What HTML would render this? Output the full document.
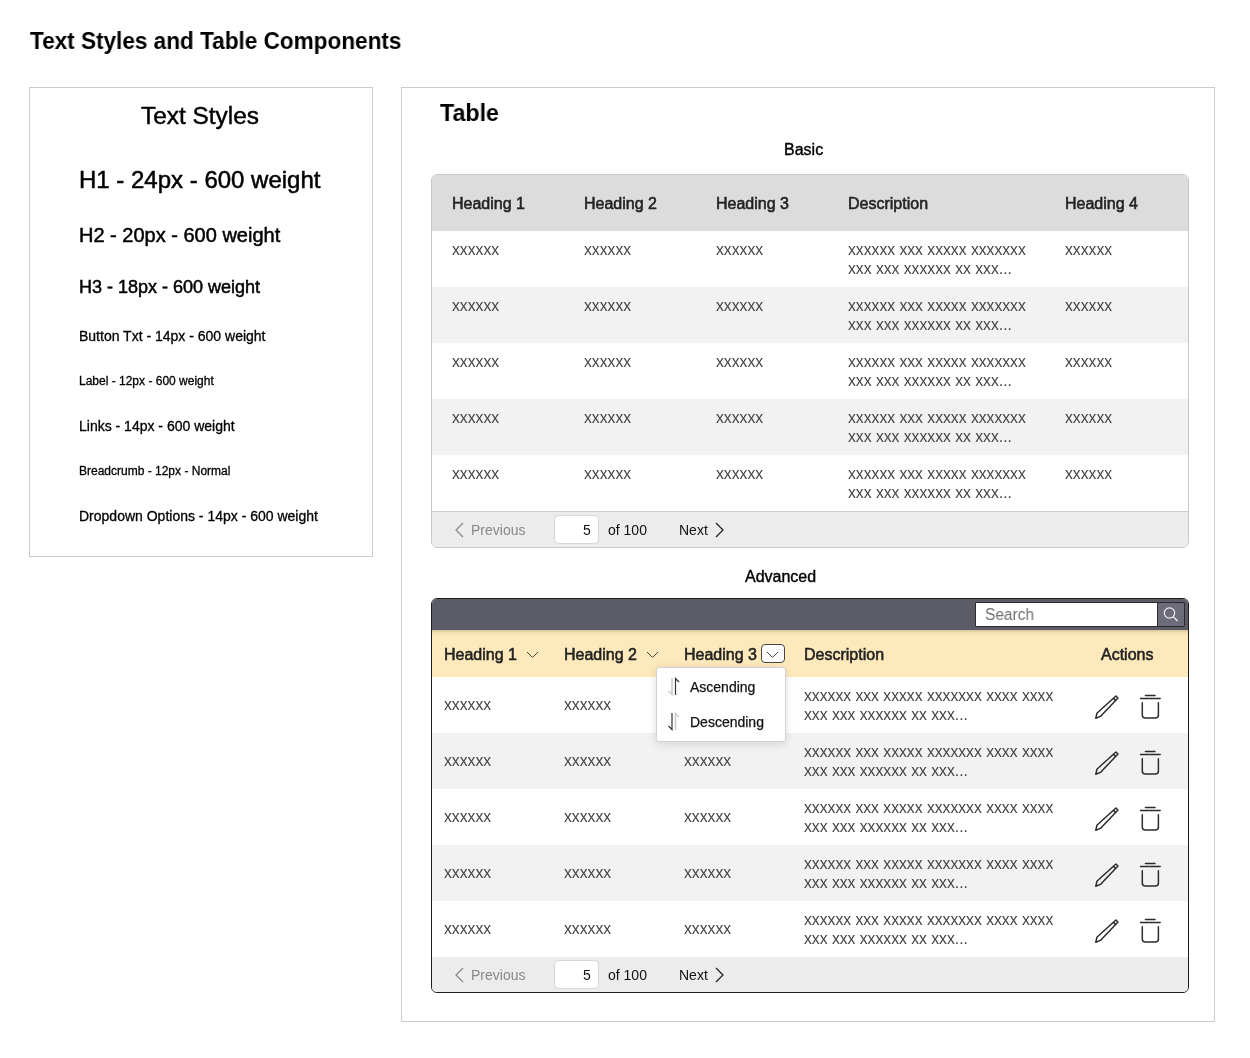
<!DOCTYPE html>
<html><head><meta charset="utf-8"><title>Text Styles and Table Components</title>
<style>
html,body{margin:0;padding:0;background:#fff;}
body{width:1250px;height:1058px;position:relative;overflow:hidden;font-family:"Liberation Sans",sans-serif;}
.t{position:absolute;white-space:nowrap;line-height:1;will-change:transform;}
.r{position:absolute;}
svg.r{overflow:visible;}
</style></head><body>
<div class="t " style="left:29.60px;top:28.68px;font-size:24px;color:#000;font-weight:700;transform:scaleX(0.94);transform-origin:0 0;">Text Styles and Table Components</div>
<div class="r" style="left:29px;top:87px;width:344px;height:470px;border:1px solid #cccccc;box-sizing:border-box;"></div>
<div class="t" style="left:-100.00px;width:600px;text-align:center;top:103.55px;font-size:24.4px;color:#000;-webkit-text-stroke:0.45px #000;">Text Styles</div>
<div class="t " style="left:78.50px;top:167.78px;font-size:24px;color:#000;-webkit-text-stroke:0.5px #000;">H1 - 24px - 600 weight</div>
<div class="t " style="left:78.50px;top:225.07px;font-size:20px;color:#000;-webkit-text-stroke:0.5px #000;">H2 - 20px - 600 weight</div>
<div class="t " style="left:78.50px;top:277.56px;font-size:18px;color:#000;-webkit-text-stroke:0.5px #000;">H3 - 18px - 600 weight</div>
<div class="t " style="left:78.50px;top:329.15px;font-size:14px;color:#000;-webkit-text-stroke:0.3px #000;">Button Txt - 14px - 600 weight</div>
<div class="t " style="left:78.50px;top:374.64px;font-size:12px;color:#000;-webkit-text-stroke:0.3px #000;">Label - 12px - 600 weight</div>
<div class="t " style="left:78.50px;top:418.95px;font-size:14px;color:#000;-webkit-text-stroke:0.3px #000;">Links - 14px - 600 weight</div>
<div class="t " style="left:78.50px;top:464.84px;font-size:12px;color:#000;-webkit-text-stroke:0.3px #000;">Breadcrumb - 12px - Normal</div>
<div class="t " style="left:78.50px;top:509.05px;font-size:14px;color:#000;-webkit-text-stroke:0.3px #000;">Dropdown Options - 14px - 600 weight</div>
<div class="r" style="left:401px;top:87px;width:814px;height:935px;border:1px solid #cccccc;box-sizing:border-box;"></div>
<div class="t " style="left:440.00px;top:100.68px;font-size:24px;color:#000;font-weight:700;transform:scaleX(0.967);transform-origin:0 0;">Table</div>
<div class="t " style="left:784.00px;top:142.06px;font-size:16px;color:#000;-webkit-text-stroke:0.4px #000;">Basic</div>
<div class="t " style="left:745.20px;top:568.66px;font-size:16px;color:#000;-webkit-text-stroke:0.4px #000;">Advanced</div>
<div class="r" style="left:431px;top:174px;width:758px;height:374px;border:1px solid #c8c8c8;border-radius:6px;box-sizing:border-box;overflow:hidden;background:#fff;"><div class="r" style="left:0px;top:0px;width:756px;height:56px;background:#dcdcdc;"></div>
<div class="r" style="left:0px;top:56px;width:756px;height:56px;background:#ffffff;"></div>
<div class="r" style="left:0px;top:112px;width:756px;height:56px;background:#f2f2f2;"></div>
<div class="r" style="left:0px;top:168px;width:756px;height:56px;background:#ffffff;"></div>
<div class="r" style="left:0px;top:224px;width:756px;height:56px;background:#f2f2f2;"></div>
<div class="r" style="left:0px;top:280px;width:756px;height:56px;background:#ffffff;"></div>
<div class="r" style="left:0px;top:336px;width:756px;height:1px;background:#cfcfcf;"></div>
<div class="r" style="left:0px;top:337px;width:756px;height:40px;background:#ececec;"></div>
</div>
<div class="t " style="left:451.90px;top:196.26px;font-size:16px;color:#222;-webkit-text-stroke:0.55px #222;">Heading 1</div>
<div class="t " style="left:583.90px;top:196.26px;font-size:16px;color:#222;-webkit-text-stroke:0.55px #222;">Heading 2</div>
<div class="t " style="left:715.90px;top:196.26px;font-size:16px;color:#222;-webkit-text-stroke:0.55px #222;">Heading 3</div>
<div class="t " style="left:847.90px;top:196.26px;font-size:16px;color:#222;-webkit-text-stroke:0.55px #222;">Description</div>
<div class="t " style="left:1064.90px;top:196.26px;font-size:16px;color:#222;-webkit-text-stroke:0.55px #222;">Heading 4</div>
<div class="t " style="left:452.30px;top:241.91px;font-size:15.7px;color:#444;">xxxxxx</div>
<div class="t " style="left:584.30px;top:241.91px;font-size:15.7px;color:#444;">xxxxxx</div>
<div class="t " style="left:716.30px;top:241.91px;font-size:15.7px;color:#444;">xxxxxx</div>
<div class="t " style="left:1065.30px;top:241.91px;font-size:15.7px;color:#444;">xxxxxx</div>
<div class="t " style="left:848.30px;top:241.91px;font-size:15.7px;color:#444;">xxxxxx xxx xxxxx xxxxxxx</div>
<div class="t " style="left:848.30px;top:260.61px;font-size:15.7px;color:#444;">xxx xxx xxxxxx xx xxx...</div>
<div class="t " style="left:452.30px;top:297.91px;font-size:15.7px;color:#444;">xxxxxx</div>
<div class="t " style="left:584.30px;top:297.91px;font-size:15.7px;color:#444;">xxxxxx</div>
<div class="t " style="left:716.30px;top:297.91px;font-size:15.7px;color:#444;">xxxxxx</div>
<div class="t " style="left:1065.30px;top:297.91px;font-size:15.7px;color:#444;">xxxxxx</div>
<div class="t " style="left:848.30px;top:297.91px;font-size:15.7px;color:#444;">xxxxxx xxx xxxxx xxxxxxx</div>
<div class="t " style="left:848.30px;top:316.61px;font-size:15.7px;color:#444;">xxx xxx xxxxxx xx xxx...</div>
<div class="t " style="left:452.30px;top:353.91px;font-size:15.7px;color:#444;">xxxxxx</div>
<div class="t " style="left:584.30px;top:353.91px;font-size:15.7px;color:#444;">xxxxxx</div>
<div class="t " style="left:716.30px;top:353.91px;font-size:15.7px;color:#444;">xxxxxx</div>
<div class="t " style="left:1065.30px;top:353.91px;font-size:15.7px;color:#444;">xxxxxx</div>
<div class="t " style="left:848.30px;top:353.91px;font-size:15.7px;color:#444;">xxxxxx xxx xxxxx xxxxxxx</div>
<div class="t " style="left:848.30px;top:372.61px;font-size:15.7px;color:#444;">xxx xxx xxxxxx xx xxx...</div>
<div class="t " style="left:452.30px;top:409.91px;font-size:15.7px;color:#444;">xxxxxx</div>
<div class="t " style="left:584.30px;top:409.91px;font-size:15.7px;color:#444;">xxxxxx</div>
<div class="t " style="left:716.30px;top:409.91px;font-size:15.7px;color:#444;">xxxxxx</div>
<div class="t " style="left:1065.30px;top:409.91px;font-size:15.7px;color:#444;">xxxxxx</div>
<div class="t " style="left:848.30px;top:409.91px;font-size:15.7px;color:#444;">xxxxxx xxx xxxxx xxxxxxx</div>
<div class="t " style="left:848.30px;top:428.61px;font-size:15.7px;color:#444;">xxx xxx xxxxxx xx xxx...</div>
<div class="t " style="left:452.30px;top:465.91px;font-size:15.7px;color:#444;">xxxxxx</div>
<div class="t " style="left:584.30px;top:465.91px;font-size:15.7px;color:#444;">xxxxxx</div>
<div class="t " style="left:716.30px;top:465.91px;font-size:15.7px;color:#444;">xxxxxx</div>
<div class="t " style="left:1065.30px;top:465.91px;font-size:15.7px;color:#444;">xxxxxx</div>
<div class="t " style="left:848.30px;top:465.91px;font-size:15.7px;color:#444;">xxxxxx xxx xxxxx xxxxxxx</div>
<div class="t " style="left:848.30px;top:484.61px;font-size:15.7px;color:#444;">xxx xxx xxxxxx xx xxx...</div>
<svg class="r" style="left:454px;top:521.5px" width="11" height="16" viewBox="0 0 11 16"><path d="M9 1 L2 8 L9 15" fill="none" stroke="#8a8a8a" stroke-width="1.3"/></svg>
<div class="t " style="left:470.80px;top:522.65px;font-size:14px;color:#888;">Previous</div>
<div class="r" style="left:554px;top:515px;width:45px;height:29px;background:#fff;border:1px solid #d6d6d6;border-radius:5px;box-sizing:border-box;"></div>
<div class="t " style="left:582.90px;top:522.65px;font-size:14px;color:#111;">5</div>
<div class="t " style="left:608.00px;top:522.65px;font-size:14px;color:#111;">of 100</div>
<div class="t " style="left:679.30px;top:522.65px;font-size:14px;color:#111;">Next</div>
<svg class="r" style="left:714px;top:521.5px" width="11" height="16" viewBox="0 0 11 16"><path d="M2 1 L9 8 L2 15" fill="none" stroke="#222" stroke-width="1.3"/></svg>
<div class="r" style="left:431px;top:598px;width:758px;height:395px;border:1px solid #1e1e1e;border-radius:6px;box-sizing:border-box;overflow:hidden;background:#fff;"><div class="r" style="left:0px;top:0px;width:756px;height:31px;background:#5c5c67;"></div>
<div class="r" style="left:0px;top:31px;width:756px;height:47px;background:#fde9bb;"></div>
<div class="r" style="left:0px;top:31px;width:756px;height:6px;background:linear-gradient(#d6c39b,#f0dcb0 40%,#fde9bb);"></div>
<div class="r" style="left:0px;top:78px;width:756px;height:56px;background:#ffffff;"></div>
<div class="r" style="left:0px;top:134px;width:756px;height:56px;background:#f2f2f2;"></div>
<div class="r" style="left:0px;top:190px;width:756px;height:56px;background:#ffffff;"></div>
<div class="r" style="left:0px;top:246px;width:756px;height:56px;background:#f2f2f2;"></div>
<div class="r" style="left:0px;top:302px;width:756px;height:56px;background:#ffffff;"></div>
<div class="r" style="left:0px;top:358px;width:756px;height:40px;background:#ececec;"></div>
</div>
<div class="r" style="left:975px;top:602px;width:210px;height:25px;background:#fff;border:1px solid #2a2a2a;box-sizing:border-box;border-radius:1px;"></div>
<div class="r" style="left:1157px;top:602px;width:28px;height:25px;background:#6c6d79;border:1px solid #2a2a2a;box-sizing:border-box;border-radius:0 2px 2px 0;"></div>
<div class="t " style="left:985.00px;top:606.66px;font-size:16px;color:#6e6e6e;transform:scaleX(0.968);transform-origin:0 0;">Search</div>
<svg class="r" style="left:1160px;top:604px" width="22" height="22" viewBox="0 0 22 22"><circle cx="9.5" cy="9" r="5.2" fill="none" stroke="#f0f0f0" stroke-width="1.2"/><path d="M13.3 12.8 L17.6 17" stroke="#f0f0f0" stroke-width="1.3" fill="none"/></svg>
<div class="t " style="left:443.90px;top:646.96px;font-size:16px;color:#222;-webkit-text-stroke:0.55px #222;">Heading 1</div>
<svg class="r" style="left:526px;top:650.5px" width="13" height="8" viewBox="0 0 13 8"><path d="M1 1 L6.5 6.5 L12 1" fill="none" stroke="#444" stroke-width="1"/></svg>
<div class="t " style="left:563.90px;top:646.96px;font-size:16px;color:#222;-webkit-text-stroke:0.55px #222;">Heading 2</div>
<svg class="r" style="left:646px;top:650.5px" width="13" height="8" viewBox="0 0 13 8"><path d="M1 1 L6.5 6.5 L12 1" fill="none" stroke="#444" stroke-width="1"/></svg>
<div class="t " style="left:683.90px;top:646.96px;font-size:16px;color:#222;-webkit-text-stroke:0.55px #222;">Heading 3</div>
<div class="r" style="left:761px;top:644px;width:24px;height:19px;background:#fff;border:1px solid #444;border-radius:4px;box-sizing:border-box;"></div>
<svg class="r" style="left:766px;top:650.5px" width="13" height="8" viewBox="0 0 13 8"><path d="M1 1 L6.5 6.5 L12 1" fill="none" stroke="#444" stroke-width="1"/></svg>
<div class="t " style="left:804.00px;top:646.96px;font-size:16px;color:#222;-webkit-text-stroke:0.55px #222;">Description</div>
<div class="t " style="left:1100.60px;top:646.96px;font-size:16px;color:#222;-webkit-text-stroke:0.55px #222;">Actions</div>
<div class="t " style="left:443.80px;top:696.71px;font-size:15.7px;color:#444;">xxxxxx</div>
<div class="t " style="left:563.80px;top:696.71px;font-size:15.7px;color:#444;">xxxxxx</div>
<div class="t " style="left:803.70px;top:688.11px;font-size:15.7px;color:#444;">xxxxxx xxx xxxxx xxxxxxx xxxx xxxx</div>
<div class="t " style="left:803.70px;top:707.31px;font-size:15.7px;color:#444;">xxx xxx xxxxxx xx xxx...</div>
<svg class="r" style="left:1092px;top:692px" width="30" height="30" viewBox="0 0 30 30"><path d="M3.8 26.2 L4.9 21.3 L23.9 4.0 L26.0 6.0 L8.4 24.4 Z M21.6 6.4 L23.7 8.5" fill="none" stroke="#2b2b2b" stroke-width="1.5" stroke-linejoin="round"/></svg>
<svg class="r" style="left:1135px;top:690px" width="30" height="32" viewBox="0 0 30 32"><path d="M10.4 5.6 H20 M5.5 8.6 H25.2 M7.3 12.7 V25 Q7.3 28 10.3 28 H20.4 Q23.4 28 23.4 25 V12.7" fill="none" stroke="#2b2b2b" stroke-width="1.5" stroke-linecap="round"/></svg>
<div class="t " style="left:443.80px;top:752.71px;font-size:15.7px;color:#444;">xxxxxx</div>
<div class="t " style="left:563.80px;top:752.71px;font-size:15.7px;color:#444;">xxxxxx</div>
<div class="t " style="left:683.70px;top:752.71px;font-size:15.7px;color:#444;">xxxxxx</div>
<div class="t " style="left:803.70px;top:744.11px;font-size:15.7px;color:#444;">xxxxxx xxx xxxxx xxxxxxx xxxx xxxx</div>
<div class="t " style="left:803.70px;top:763.31px;font-size:15.7px;color:#444;">xxx xxx xxxxxx xx xxx...</div>
<svg class="r" style="left:1092px;top:748px" width="30" height="30" viewBox="0 0 30 30"><path d="M3.8 26.2 L4.9 21.3 L23.9 4.0 L26.0 6.0 L8.4 24.4 Z M21.6 6.4 L23.7 8.5" fill="none" stroke="#2b2b2b" stroke-width="1.5" stroke-linejoin="round"/></svg>
<svg class="r" style="left:1135px;top:746px" width="30" height="32" viewBox="0 0 30 32"><path d="M10.4 5.6 H20 M5.5 8.6 H25.2 M7.3 12.7 V25 Q7.3 28 10.3 28 H20.4 Q23.4 28 23.4 25 V12.7" fill="none" stroke="#2b2b2b" stroke-width="1.5" stroke-linecap="round"/></svg>
<div class="t " style="left:443.80px;top:808.71px;font-size:15.7px;color:#444;">xxxxxx</div>
<div class="t " style="left:563.80px;top:808.71px;font-size:15.7px;color:#444;">xxxxxx</div>
<div class="t " style="left:683.70px;top:808.71px;font-size:15.7px;color:#444;">xxxxxx</div>
<div class="t " style="left:803.70px;top:800.11px;font-size:15.7px;color:#444;">xxxxxx xxx xxxxx xxxxxxx xxxx xxxx</div>
<div class="t " style="left:803.70px;top:819.31px;font-size:15.7px;color:#444;">xxx xxx xxxxxx xx xxx...</div>
<svg class="r" style="left:1092px;top:804px" width="30" height="30" viewBox="0 0 30 30"><path d="M3.8 26.2 L4.9 21.3 L23.9 4.0 L26.0 6.0 L8.4 24.4 Z M21.6 6.4 L23.7 8.5" fill="none" stroke="#2b2b2b" stroke-width="1.5" stroke-linejoin="round"/></svg>
<svg class="r" style="left:1135px;top:802px" width="30" height="32" viewBox="0 0 30 32"><path d="M10.4 5.6 H20 M5.5 8.6 H25.2 M7.3 12.7 V25 Q7.3 28 10.3 28 H20.4 Q23.4 28 23.4 25 V12.7" fill="none" stroke="#2b2b2b" stroke-width="1.5" stroke-linecap="round"/></svg>
<div class="t " style="left:443.80px;top:864.71px;font-size:15.7px;color:#444;">xxxxxx</div>
<div class="t " style="left:563.80px;top:864.71px;font-size:15.7px;color:#444;">xxxxxx</div>
<div class="t " style="left:683.70px;top:864.71px;font-size:15.7px;color:#444;">xxxxxx</div>
<div class="t " style="left:803.70px;top:856.11px;font-size:15.7px;color:#444;">xxxxxx xxx xxxxx xxxxxxx xxxx xxxx</div>
<div class="t " style="left:803.70px;top:875.31px;font-size:15.7px;color:#444;">xxx xxx xxxxxx xx xxx...</div>
<svg class="r" style="left:1092px;top:860px" width="30" height="30" viewBox="0 0 30 30"><path d="M3.8 26.2 L4.9 21.3 L23.9 4.0 L26.0 6.0 L8.4 24.4 Z M21.6 6.4 L23.7 8.5" fill="none" stroke="#2b2b2b" stroke-width="1.5" stroke-linejoin="round"/></svg>
<svg class="r" style="left:1135px;top:858px" width="30" height="32" viewBox="0 0 30 32"><path d="M10.4 5.6 H20 M5.5 8.6 H25.2 M7.3 12.7 V25 Q7.3 28 10.3 28 H20.4 Q23.4 28 23.4 25 V12.7" fill="none" stroke="#2b2b2b" stroke-width="1.5" stroke-linecap="round"/></svg>
<div class="t " style="left:443.80px;top:920.71px;font-size:15.7px;color:#444;">xxxxxx</div>
<div class="t " style="left:563.80px;top:920.71px;font-size:15.7px;color:#444;">xxxxxx</div>
<div class="t " style="left:683.70px;top:920.71px;font-size:15.7px;color:#444;">xxxxxx</div>
<div class="t " style="left:803.70px;top:912.11px;font-size:15.7px;color:#444;">xxxxxx xxx xxxxx xxxxxxx xxxx xxxx</div>
<div class="t " style="left:803.70px;top:931.31px;font-size:15.7px;color:#444;">xxx xxx xxxxxx xx xxx...</div>
<svg class="r" style="left:1092px;top:916px" width="30" height="30" viewBox="0 0 30 30"><path d="M3.8 26.2 L4.9 21.3 L23.9 4.0 L26.0 6.0 L8.4 24.4 Z M21.6 6.4 L23.7 8.5" fill="none" stroke="#2b2b2b" stroke-width="1.5" stroke-linejoin="round"/></svg>
<svg class="r" style="left:1135px;top:914px" width="30" height="32" viewBox="0 0 30 32"><path d="M10.4 5.6 H20 M5.5 8.6 H25.2 M7.3 12.7 V25 Q7.3 28 10.3 28 H20.4 Q23.4 28 23.4 25 V12.7" fill="none" stroke="#2b2b2b" stroke-width="1.5" stroke-linecap="round"/></svg>
<svg class="r" style="left:454px;top:966.5px" width="11" height="16" viewBox="0 0 11 16"><path d="M9 1 L2 8 L9 15" fill="none" stroke="#8a8a8a" stroke-width="1.3"/></svg>
<div class="t " style="left:470.80px;top:967.65px;font-size:14px;color:#888;">Previous</div>
<div class="r" style="left:554px;top:960px;width:45px;height:29px;background:#fff;border:1px solid #d6d6d6;border-radius:5px;box-sizing:border-box;"></div>
<div class="t " style="left:582.90px;top:967.65px;font-size:14px;color:#111;">5</div>
<div class="t " style="left:608.00px;top:967.65px;font-size:14px;color:#111;">of 100</div>
<div class="t " style="left:679.30px;top:967.65px;font-size:14px;color:#111;">Next</div>
<svg class="r" style="left:714px;top:966.5px" width="11" height="16" viewBox="0 0 11 16"><path d="M2 1 L9 8 L2 15" fill="none" stroke="#222" stroke-width="1.3"/></svg>
<div class="r" style="left:656px;top:667px;width:130px;height:75px;background:#fff;border:1px solid #d2d2d2;border-radius:3px;box-sizing:border-box;box-shadow:0 2px 10px rgba(0,0,0,0.13);"></div>
<svg class="r" style="left:667px;top:677px" width="16" height="20" viewBox="0 0 16 20"><path d="M5 1 V17.5 L1.5 14" fill="none" stroke="#cfcfcf" stroke-width="1.7"/><path d="M8.5 18 V1.5 L12 5" fill="none" stroke="#333" stroke-width="1.2"/></svg>
<div class="t " style="left:690.00px;top:679.85px;font-size:14px;color:#111;-webkit-text-stroke:0.25px #111;">Ascending</div>
<svg class="r" style="left:667px;top:712px" width="16" height="20" viewBox="0 0 16 20"><path d="M5 1 V17.5 L1.5 14" fill="none" stroke="#333" stroke-width="1.2"/><path d="M8.5 18 V1.5 L12 5" fill="none" stroke="#cfcfcf" stroke-width="1.7"/></svg>
<div class="t " style="left:689.80px;top:714.95px;font-size:14px;color:#111;-webkit-text-stroke:0.25px #111;">Descending</div>
</body></html>
